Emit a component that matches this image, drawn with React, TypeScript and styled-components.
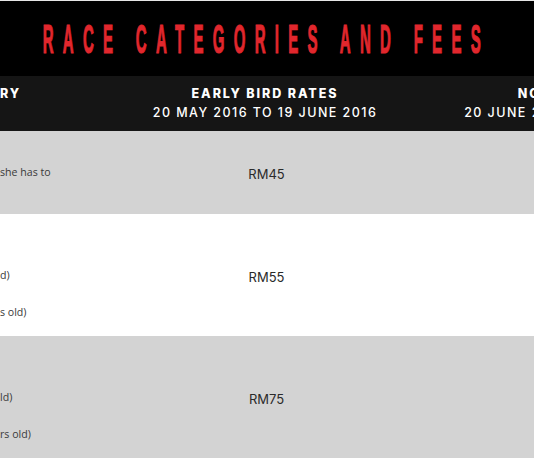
import React from "react";
import styled, { createGlobalStyle } from "styled-components";

const Global = createGlobalStyle`
  html, body { margin: 0; padding: 0; background: #ffffff; }
  body { font-family: "Open Sans", "Liberation Sans", sans-serif; }
`;

const Page = styled.div`
  width: 534px;
  height: 458px;
  overflow: hidden;
  padding-top: 1px;
  box-sizing: border-box;
  background: #e6e6e6;
`;

const Banner = styled.header`
  height: 75px;
  background: #000000;
  display: flex;
  align-items: center;
  justify-content: center;
  overflow: hidden;
`;

const Title = styled.h1`
  margin: 0 10px 0 0;
  display: inline-block;
  white-space: nowrap;
  font-family: "Liberation Sans", Arial, sans-serif;
  font-weight: 700;
  font-size: 30px;
  line-height: 1;
  letter-spacing: 18.6px;
  padding-left: 18.6px;
  color: #e1272d;
  -webkit-text-stroke: 0.9px #e1272d;
  transform: scale(0.5, 1.37);
  transform-origin: center;
`;

const Grid = styled.div`
  display: grid;
  grid-template-columns: 108px 314px 314px;
  width: 736px;
`;

const HeadCell = styled.div<{ $align?: "left" | "center" }>`
  background: #151515;
  height: 55px;
  box-sizing: border-box;
  padding-top: 8px;
  display: flex;
  flex-direction: column;
  align-items: ${(p) => (p.$align === "left" ? "flex-start" : "center")};
  color: #ffffff;
  font-family: Inter, "Liberation Sans", sans-serif;
  white-space: nowrap;
  overflow: hidden;
`;

const HeadTitle = styled.span`
  font-weight: 800;
  font-size: 12.5px;
  line-height: 19px;
  letter-spacing: 1.9px;
`;

const HeadDates = styled.span`
  font-weight: 500;
  font-size: 12.5px;
  line-height: 19px;
  letter-spacing: 1.45px;
`;

const Cell = styled.div<{ $shade: boolean; $h: number; $align?: "left" | "center" }>`
  background: ${(p) => (p.$shade ? "#d3d3d3" : "#ffffff")};
  height: ${(p) => p.$h}px;
  display: flex;
  flex-direction: column;
  justify-content: center;
  align-items: ${(p) => (p.$align === "left" ? "flex-start" : "center")};
  white-space: nowrap;
  overflow: hidden;
`;

const CatLine = styled.span`
  font-family: "Open Sans", "Liberation Sans", sans-serif;
  font-size: 10.6px;
  line-height: 37px;
  color: #3a3a3a;
`;

const Price = styled.span`
  font-family: Inter, "Liberation Sans", sans-serif;
  font-size: 13px;
  line-height: 20px;
  color: #2a2a2a;
  padding-top: 3px;
  padding-left: 3px;
`;

const rows = [
  { lines: ["she has to"], early: "RM45", normal: "RM55", h: 83 },
  { lines: ["\u00a0", "d)", "s old)"], early: "RM55", normal: "RM65", h: 122 },
  { lines: ["\u00a0", "ld)", "rs old)"], early: "RM75", normal: "RM85", h: 122 },
];

export default function App() {
  return (
    <>
      <Global />
      <Page>
        <Banner>
          <Title>RACE CATEGORIES AND FEES</Title>
        </Banner>
        <Grid>
          <HeadCell $align="left">
            <HeadTitle>RY</HeadTitle>
          </HeadCell>
          <HeadCell>
            <HeadTitle>EARLY BIRD RATES</HeadTitle>
            <HeadDates>20 MAY 2016 TO 19 JUNE 2016</HeadDates>
          </HeadCell>
          <HeadCell>
            <HeadTitle>NORMAL RATES</HeadTitle>
            <HeadDates>20 JUNE 2016 TO 10 JULY 2016</HeadDates>
          </HeadCell>
          {rows.map((r, i) => (
            <React.Fragment key={i}>
              <Cell $shade={i % 2 === 0} $h={r.h} $align="left">
                {r.lines.map((l, j) => (
                  <CatLine key={j}>{l}</CatLine>
                ))}
              </Cell>
              <Cell $shade={i % 2 === 0} $h={r.h}>
                <Price>{r.early}</Price>
              </Cell>
              <Cell $shade={i % 2 === 0} $h={r.h}>
                <Price>{r.normal}</Price>
              </Cell>
            </React.Fragment>
          ))}
        </Grid>
      </Page>
    </>
  );
}
